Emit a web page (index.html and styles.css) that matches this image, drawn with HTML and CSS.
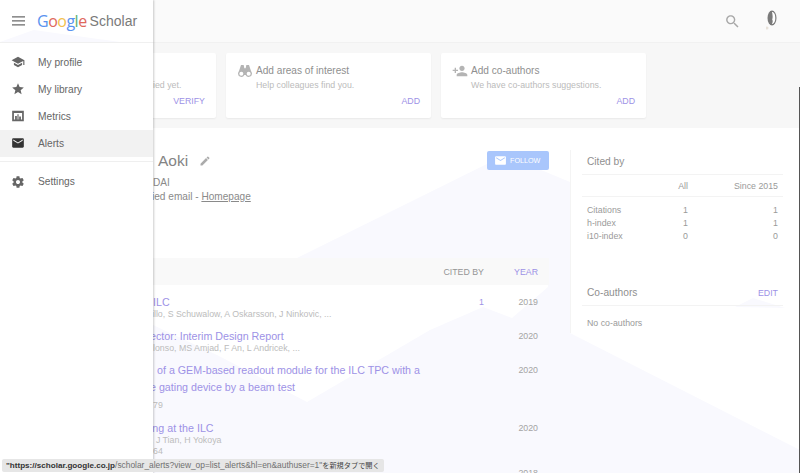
FILE: index.html
```html
<!DOCTYPE html>
<html lang="en">
<head>
    <meta charset="UTF-8">
    <title>Google Scholar</title>
    <link rel="stylesheet" href="styles.css">
</head>
<body>
    <svg class="backdrop" viewBox="0 0 800 473" aria-hidden="true">
        <polygon points="297,258 505,155 570,182 570,333 800,450 800,473 153,473 153,325 217,355 307,402 430,330 483,307 512,318 548,287 549,258"/>
        <polygon points="735,307 753,298 785,308"/>
    </svg>

    <header class="topbar">
        <svg class="search" viewBox="0 0 24 24"><path d="M15.5 14h-.79l-.28-.27C15.41 12.59 16 11.11 16 9.5 16 5.91 13.09 3 9.5 3S3 5.91 3 9.5 5.91 16 9.5 16c1.61 0 3.09-.59 4.23-1.57l.27.28v.79l5 4.99L20.49 19l-4.99-5zm-6 0C7.01 14 5 11.99 5 9.5S7.01 5 9.5 5 14 7.01 14 9.5 11.99 14 9.5 14z"/></svg>
        <svg class="avatar" viewBox="0 0 12 20">
            <ellipse cx="6" cy="8" rx="4.500" ry="7.500" fill="#7a7a7a"/>
            <path d="M6 2c2.200 0 3.300 2.400 3.300 6S8 14 6 14c.8-2 1-3 .2-4.500C7 8 6.600 4.500 6 2z" fill="#fff"/>
            <circle cx="1" cy="18" r="1.500" fill="#e8e2da"/>
        </svg>
    </header>

    <section class="tasks">
        <div class="card">
            <div class="card-head"></div>
            <p class="card-desc off-verify">ied yet.</p>
            <a class="card-action">VERIFY</a>
        </div>
        <div class="card">
            <div class="card-head">
                <svg class="card-icon" viewBox="0 0 24 24"><path fill-rule="evenodd" d="M6 3h4l1 5h2l1-5h4l3 9c1 1.500 1.500 2.700 1.500 4a5 5 0 0 1-9.500 2h-2a5 5 0 0 1-9.500-2c0-1.300.5-2.500 1.500-4zM6.500 13a3 3 0 1 0 0 6 3 3 0 0 0 0-6zm11 0a3 3 0 1 0 0 6 3 3 0 0 0 0-6z"/></svg>
                <span class="card-title">Add areas of interest</span>
            </div>
            <p class="card-desc">Help colleagues find you.</p>
            <a class="card-action">ADD</a>
        </div>
        <div class="card">
            <div class="card-head">
                <svg class="card-icon" viewBox="0 0 24 24"><path d="M15 12c2.210 0 4-1.790 4-4s-1.790-4-4-4-4 1.790-4 4 1.790 4 4 4zm-9-2V7H4v3H1v2h3v3h2v-3h3v-2H6zm9 4c-2.670 0-8 1.340-8 4v2h16v-2c0-2.660-5.330-4-8-4z"/></svg>
                <span class="card-title">Add co-authors</span>
            </div>
            <p class="card-desc">We have co-authors suggestions.</p>
            <a class="card-action">ADD</a>
        </div>
    </section>

    <main class="main">
        <div class="left">
            <div class="profile">
                <div class="name-row">
                    <h1 class="name">Aoki</h1>
                    <svg class="pencil" viewBox="0 0 24 24"><path d="M3 17.250V21h3.750L17.810 9.940l-3.750-3.750L3 17.250zM20.710 7.040c.39-.39.39-1.020 0-1.410l-2.340-2.340c-.39-.39-1.020-.39-1.410 0l-1.830 1.830 3.750 3.750 1.830-1.830z"/></svg>
                    <button class="follow">
                        <svg viewBox="0 0 24 24"><path d="M20 4H4c-1.100 0-2 .9-2 2v12c0 1.100.9 2 2 2h16c1.100 0 2-.9 2-2V6c0-1.100-.9-2-2-2zm0 4l-8 5-8-5V6l8 5 8-5v2z"/></svg>
                        FOLLOW
                    </button>
                </div>
                <p class="affil first">DAI</p>
                <p class="affil email">ied email - <a>Homepage</a></p>
            </div>

            <div class="table-head">
                <span></span>
                <span class="col-cited">CITED BY</span>
                <span class="col-year active">YEAR</span>
            </div>

            <div class="article">
                <div class="article-main">
                    <a class="article-title off-ilc">ILC</a>
                    <p class="authors off-a1">illo, S Schuwalow, A Oskarsson, J Ninkovic, ...</p>
                </div>
                <a class="col-cited cited-link">1</a>
                <span class="col-year">2019</span>
            </div>
            <div class="article">
                <div class="article-main">
                    <a class="article-title">ector: Interim Design Report</a>
                    <p class="authors off-a2">lonso, MS Amjad, F An, L Andricek, ...</p>
                </div>
                <span class="col-cited"></span>
                <span class="col-year">2020</span>
            </div>
            <div class="article">
                <div class="article-main">
                    <a class="article-title off-long">of a GEM-based readout module for the ILC TPC with a</a>
                    <a class="article-title">e gating device by a beam test</a>
                    <p class="journal off-ilc">79</p>
                </div>
                <span class="col-cited"></span>
                <span class="col-year">2020</span>
            </div>
            <div class="article">
                <div class="article-main">
                    <a class="article-title">ing at the ILC</a>
                    <p class="authors off-a4">, J Tian, H Yokoya</p>
                    <p class="authors off-ilc">64</p>
                </div>
                <span class="col-cited"></span>
                <span class="col-year">2020</span>
            </div>
            <div class="article">
                <div class="article-main"></div>
                <span class="col-cited"></span>
                <span class="col-year">2018</span>
            </div>
        </div>

        <aside class="right">
            <div class="side-box cited">
                <h2 class="side-title">Cited by</h2>
                <div class="stats stats-head"><span></span><span>All</span><span>Since 2015</span></div>
                <div class="stats-body">
                    <div class="stats"><span>Citations</span><span>1</span><span>1</span></div>
                    <div class="stats"><span>h-index</span><span>1</span><span>1</span></div>
                    <div class="stats"><span>i10-index</span><span>0</span><span>0</span></div>
                </div>
            </div>
            <div class="side-box coauthors">
                <div class="side-title split"><h2>Co-authors</h2><a>EDIT</a></div>
                <p class="none">No co-authors</p>
            </div>
        </aside>
    </main>

    <nav class="drawer">
        <div class="drawer-head">
            <svg class="burger" viewBox="0 0 14 10"><path d="M0 0h14v1.300H0zM0 4.300h14v1.300H0zM0 8.600h14v1.300H0z"/></svg>
            <span class="logo"><span class="g-blue">G</span><span class="g-red">o</span><span class="g-yellow">o</span><span class="g-blue">g</span><span class="g-green">l</span><span class="g-red">e</span></span>
            <span class="logo-word">Scholar</span>
        </div>
        <ul class="menu">
            <li><svg viewBox="0 0 24 24"><path d="M5 13.180v4L12 21l7-3.820v-4L12 17l-7-3.820zM12 3L1 9l11 6 9-4.910V17h2V9L12 3z"/></svg>My profile</li>
            <li><svg viewBox="0 0 24 24"><path d="M12 17.270L18.180 21l-1.640-7.030L22 9.240l-7.190-.61L12 2 9.190 8.630 2 9.240l5.460 4.730L5.820 21z"/></svg>My library</li>
            <li><svg viewBox="0 0 24 24"><path fill-rule="evenodd" d="M2 3h20v18H2zM5 7v11h14V7zM7 12h3v6H7zM11 9h2v9h-2zM14 13h3v5h-3z"/></svg>Metrics</li>
            <li class="current"><svg viewBox="0 0 24 24"><path d="M20 4H4c-1.100 0-2 .9-2 2v12c0 1.100.9 2 2 2h16c1.100 0 2-.9 2-2V6c0-1.100-.9-2-2-2zm0 4l-8 5-8-5V6l8 5 8-5v2z"/></svg>Alerts</li>
        </ul>
        <ul class="menu menu-bottom">
            <li><svg viewBox="0 0 24 24"><path d="M19.430 12.980c.04-.32.07-.64.07-.98s-.03-.66-.07-.98l2.110-1.650c.19-.15.24-.42.12-.64l-2-3.460c-.12-.22-.39-.3-.61-.22l-2.490 1c-.52-.4-1.080-.73-1.690-.98l-.38-2.650C14.460 2.180 14.250 2 14 2h-4c-.25 0-.46.18-.49.42l-.38 2.650c-.61.25-1.170.59-1.690.98l-2.490-1c-.23-.09-.49 0-.61.22l-2 3.460c-.13.22-.07.49.12.64l2.110 1.650c-.04.32-.07.65-.07.98s.03.66.07.98l-2.110 1.650c-.19.15-.24.42-.12.64l2 3.460c.12.22.39.3.61.22l2.490-1c.52.4 1.080.73 1.690.98l.38 2.650c.03.24.24.42.49.42h4c.25 0 .46-.18.49-.42l.38-2.650c.61-.25 1.170-.59 1.690-.98l2.490 1c.23.09.49 0 .61-.22l2-3.460c.12-.22.07-.49-.12-.64l-2.110-1.650zM12 15.500c-1.930 0-3.500-1.570-3.500-3.500s1.570-3.500 3.500-3.500 3.500 1.570 3.500 3.500-1.570 3.500-3.500 3.500z"/></svg>Settings</li>
        </ul>
    </nav>

    <div class="status"><b>"https://scholar.google.co.jp</b>/scholar_alerts?view_op=list_alerts&amp;hl=en&amp;authuser=1"<span class="status-ja">を新規タブで開く</span></div>
    <div class="edge"></div>
</body>
</html>
```

FILE: styles.css
```css
* {
    box-sizing: border-box;
}

html, body {
    height: 100%;
}

body {
    margin: 0;
    font-family: "Liberation Sans", Arial, sans-serif;
    color: #8a8a8a;
    background: #fff;
    overflow: hidden;
    position: relative;
}

h1, h2, p, ul {
    margin: 0;
    padding: 0;
    font-weight: normal;
}

.backdrop {
    position: absolute;
    left: 0;
    top: 0;
    width: 800px;
    height: 473px;
    fill: #f9f9fe;
}

/* top bar */
.topbar {
    position: relative;
    height: 43px;
    background: #fafafa;
    border-bottom: 1px solid #f1f1f1;
    display: flex;
    justify-content: flex-end;
    align-items: flex-start;
}

.search {
    width: 17px;
    height: 17px;
    margin: 13px 25px 0 0;
    fill: #a8a8a8;
}

.avatar {
    width: 12px;
    height: 20px;
    margin: 10px 22px 0 0;
}

/* cards */
.tasks {
    position: relative;
    height: 85px;
    background: #f7f7f7;
    padding: 10px 0 0 11px;
    display: flex;
    gap: 10px;
    align-items: flex-start;
}

.card {
    width: 205px;
    height: 65px;
    background: #fff;
    border-radius: 2px;
    box-shadow: 0 1px 2px rgba(0, 0, 0, .06);
    padding: 10px 11px 0 11px;
    display: flex;
    flex-direction: column;
}

.card-head {
    display: flex;
    align-items: center;
    gap: 3px;
    height: 15px;
}

.card-icon {
    width: 16px;
    height: 16px;
    flex: none;
    fill: #b4b4b4;
}

.card-title {
    font-size: 10.100px;
    color: #8f8f8f;
}

.card-desc {
    font-size: 8.800px;
    color: #bbb;
    margin: 1px 0 0 19px;
    line-height: 13px;
}

.off-verify {
    margin-left: 131px;
}

.card-action {
    font-size: 8.800px;
    color: #9d92e6;
    align-self: flex-end;
    margin-top: 4px;
}

/* main area */
.main {
    position: relative;
    display: flex;
}

.left {
    width: 549px;
    flex: none;
}

.profile {
    height: 130px;
    padding: 23px 0 0 150px;
}

.name-row {
    display: flex;
    align-items: center;
    height: 19px;
    padding-left: 8px;
}

.name {
    font-size: 15.500px;
    color: #848484;
}

.pencil {
    width: 12px;
    height: 12px;
    fill: #ababab;
    margin-left: 11px;
}

.follow {
    margin-left: auto;
    width: 62px;
    height: 19px;
    background: #a9c6fc;
    border: 0;
    border-radius: 2px;
    color: #fff;
    font: 7.200px "Liberation Sans", Arial, sans-serif;
    display: flex;
    align-items: center;
    gap: 3px;
    padding: 0 0 0 7px;
}

.follow svg {
    width: 13px;
    height: 13px;
    fill: #fff;
}

.affil {
    font-size: 10.100px;
    line-height: 13.500px;
    color: #8a8a8a;
    padding-left: 3px;
}

.first {
    margin-top: 6px;
}

.email {
    padding-left: 2px;
}

.email a {
    text-decoration: underline;
}

.table-head, .article {
    display: grid;
    grid-template-columns: 1fr 60px 54px;
    padding-right: 11px;
}

.table-head {
    height: 27px;
    align-items: center;
    background: #f9f9f9;
    font-size: 8.800px;
    color: #959595;
    margin-bottom: 1px;
}

.col-cited, .col-year {
    text-align: right;
}

.active {
    color: #9d92e6;
}

.article {
    padding-top: 8px;
    font-size: 8.800px;
    line-height: 17px;
    color: #a4a4a4;
}

.article-main {
    padding-left: 150px;
    white-space: nowrap;
    min-width: 0;
}

.article-title {
    display: block;
    font-size: 10.700px;
    line-height: 17px;
    color: #9d92e6;
}

.authors, .journal {
    font-size: 8.800px;
    line-height: 11px;
    color: #bcbcbc;
}

.authors:first-of-type {
    margin-top: -2px;
}

.journal {
    margin-top: 4px;
    margin-bottom: 1px;
}

.cited-link {
    color: #9d92e6;
}

.off-ilc { padding-left: 3px; }
.off-a1 { padding-left: 2px; }
.off-a2 { padding-left: 3px; }
.off-long { padding-left: 7px; }
.off-a4 { padding-left: 1px; }

/* right column */
.right {
    width: 213px;
    flex: none;
    margin-left: 21px;
}

.side-box {
    font-size: 8.800px;
    color: #9a9a9a;
}

.cited {
    border-left: 1px solid #f4f4f4;
    margin-top: 22px;
    padding: 3px 0 0 11px;
    height: 183px;
}

.side-title {
    font-size: 10.200px;
    color: #8f8f8f;
    height: 22px;
    line-height: 18px;
    padding-left: 5px;
    border-bottom: 1px solid #f3f3f3;
}

.split {
    display: flex;
    justify-content: space-between;
    padding-right: 5px;
}

.split h2 {
    font-size: 10.200px;
}

.split a {
    font-size: 8.800px;
    color: #9d92e6;
}

.stats {
    display: grid;
    grid-template-columns: 1fr 40px 90px;
    padding: 0 5px;
    line-height: 13px;
}

.stats span:not(:first-child) {
    text-align: right;
}

.stats-head {
    height: 22px;
    line-height: 22px;
    border-bottom: 1px solid #f3f3f3;
}

.stats-body {
    padding-top: 7px;
}

.coauthors {
    margin-top: -49px;
    padding-left: 12px;
}

.none {
    padding: 11px 0 0 5px;
    line-height: 13px;
}

/* overlays */
.drawer {
    position: absolute;
    left: 0;
    top: 0;
    bottom: 0;
    width: 153px;
    background: #fff;
    box-shadow: 1px 0 2px rgba(0, 0, 0, .2);
    color: #666;
}

.drawer-head {
    position: relative;
    height: 43px;
    border-bottom: 1px solid #f0f0f0;
    display: flex;
    align-items: center;
    padding-left: 12px;
}

.drawer-head::before {
    content: "";
    position: absolute;
    left: 0;
    bottom: 0;
    width: 120px;
    height: 12px;
    background: #f9f9fe;
    clip-path: polygon(0 100%, 28% 0, 100% 100%);
}

.burger {
    position: relative;
    width: 13px;
    height: 10px;
    fill: #6b6b6b;
    margin-right: 12px;
}

.logo {
    position: relative;
    font-family: "Open Sans", sans-serif;
    font-size: 16px;
    letter-spacing: -.5px;
}

.logo-word {
    position: relative;
    font-size: 14px;
    color: #7a7a7a;
    margin-left: 3px;
}

.g-blue { color: #5a93ef; }
.g-red { color: #e0685c; }
.g-yellow { color: #f2c14e; }
.g-green { color: #5cb176; }

.menu {
    list-style: none;
    padding-top: 5.500px;
}

.menu li {
    height: 27px;
    display: flex;
    align-items: center;
    font-size: 10.200px;
    padding-left: 10.500px;
}

.menu svg {
    width: 14px;
    height: 14px;
    fill: #666;
    margin-right: 13.500px;
    flex: none;
}

.current {
    background: #f2f2f2;
}

.menu .current svg {
    fill: #333;
}

.menu-bottom {
    border-top: 1px solid #efefef;
    margin-top: 4px;
    padding-top: 6.500px;
}

.status {
    position: absolute;
    left: 2px;
    bottom: 1px;
    width: 382px;
    height: 13px;
    background: #e6e6e6;
    border-radius: 2px;
    font: 8.400px/13px "Liberation Sans", sans-serif;
    color: #707070;
    padding-left: 4px;
    white-space: nowrap;
}

.status b {
    font-size: 8.100px;
    color: #333;
}

.status-ja {
    font-family: "Noto Sans CJK JP", sans-serif;
    font-size: 7.200px;
    color: #444;
}

.edge {
    position: absolute;
    right: 0;
    top: 87px;
    bottom: 0;
    width: 1px;
    background: #555;
}
```
